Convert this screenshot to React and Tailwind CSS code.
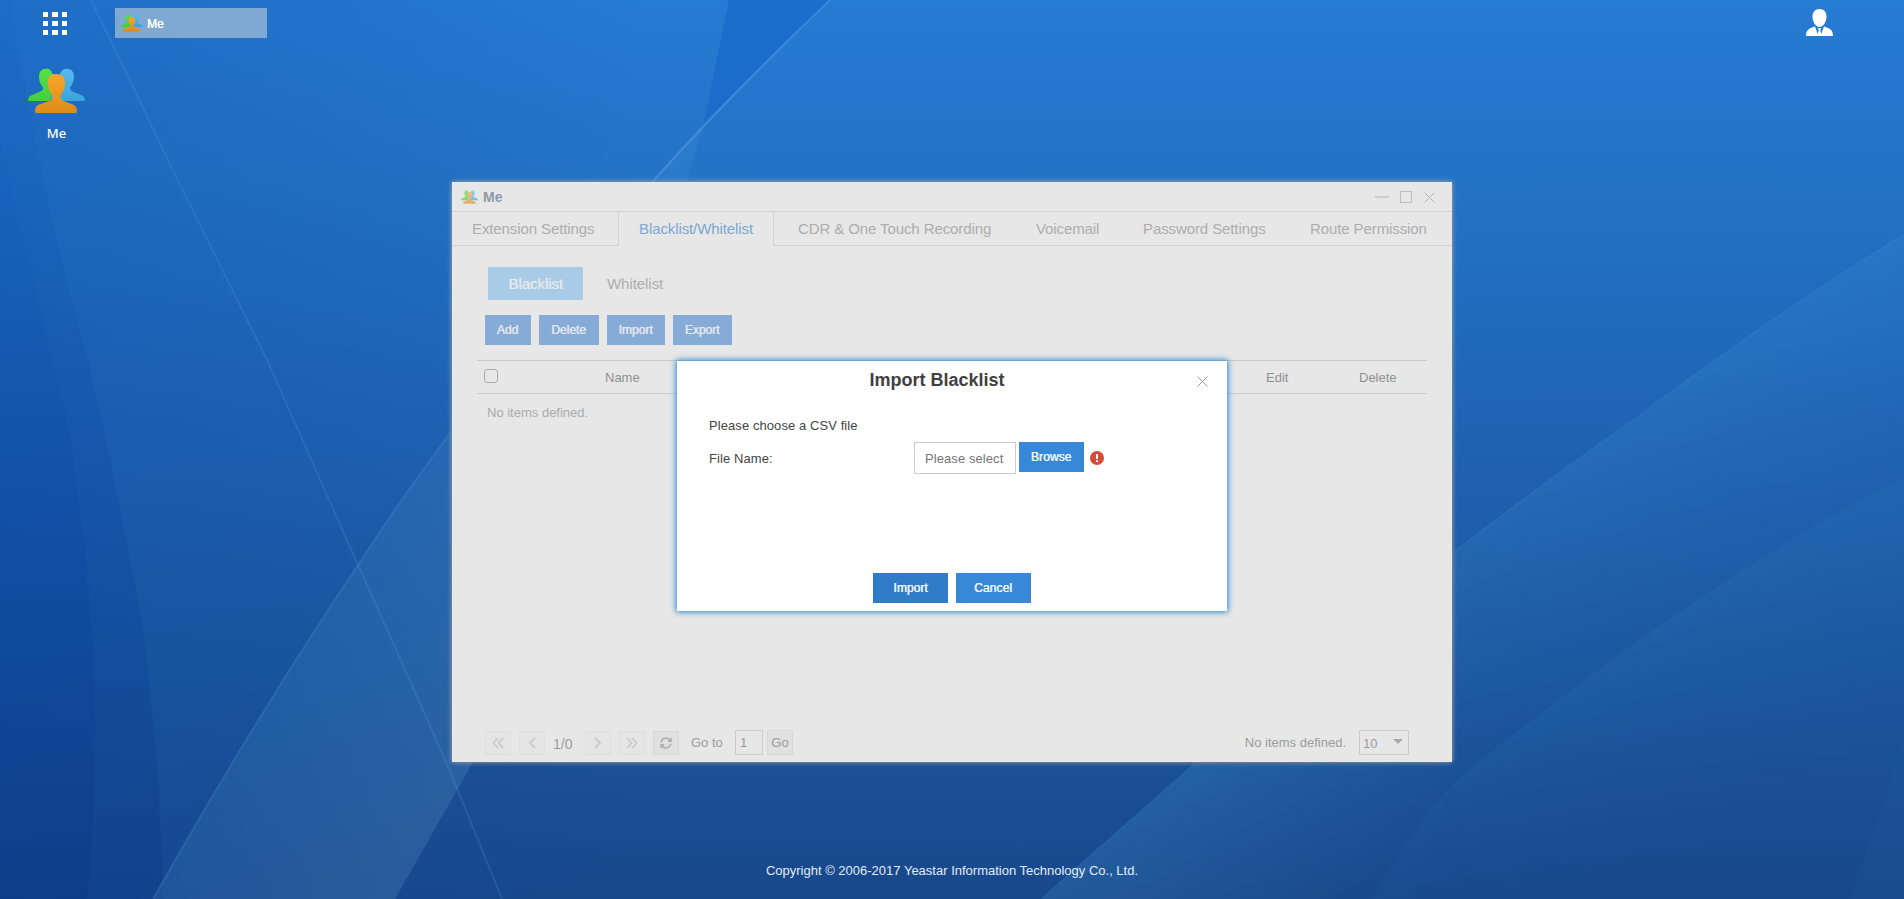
import React from "react";
import { FaSyncAlt } from "react-icons/fa";

function Wallpaper() {
  return (
    <svg className="absolute inset-0 h-full w-full" viewBox="0 0 1904 899" preserveAspectRatio="none" aria-hidden="true">
      <defs>
        <linearGradient id="base" x1="0" y1="0" x2="0" y2="1">
          <stop offset="0" stopColor="#267bd2" />
          <stop offset="0.2" stopColor="#2373c7" />
          <stop offset="0.5" stopColor="#1f62b2" />
          <stop offset="0.78" stopColor="#1b549b" />
          <stop offset="1" stopColor="#18488b" />
        </linearGradient>
        <linearGradient id="leftShade" x1="0" y1="0" x2="1" y2="0">
          <stop offset="0" stopColor="#084aa6" stopOpacity="0.26" />
          <stop offset="0.5" stopColor="#08439a" stopOpacity="0.13" />
          <stop offset="1" stopColor="#08439a" stopOpacity="0" />
        </linearGradient>
        <linearGradient id="curve" x1="0" y1="0" x2="0" y2="1">
          <stop offset="0" stopColor="#0550b4" stopOpacity="0.05" />
          <stop offset="0.5" stopColor="#0540a0" stopOpacity="0.2" />
          <stop offset="1" stopColor="#06307e" stopOpacity="0.26" />
        </linearGradient>
        <linearGradient id="beam" gradientUnits="userSpaceOnUse" x1="280" y1="660" x2="480" y2="790">
          <stop offset="0" stopColor="#3f86c0" stopOpacity="0.22" />
          <stop offset="1" stopColor="#5a96c4" stopOpacity="0.27" />
        </linearGradient>
        <linearGradient id="rightBeam" gradientUnits="userSpaceOnUse" x1="1500" y1="510" x2="1630" y2="700">
          <stop offset="0" stopColor="#3a8fd0" stopOpacity="0.22" />
          <stop offset="1" stopColor="#2a78c0" stopOpacity="0" />
        </linearGradient>
        <linearGradient id="rightLow" gradientUnits="userSpaceOnUse" x1="1640" y1="640" x2="1740" y2="830">
          <stop offset="0" stopColor="#2c7fbd" stopOpacity="0.16" />
          <stop offset="1" stopColor="#1e5ca6" stopOpacity="0" />
        </linearGradient>
        <linearGradient id="fade" gradientUnits="userSpaceOnUse" x1="1180" y1="770" x2="1420" y2="899">
          <stop offset="0" stopColor="#4188bb" stopOpacity="0.14" />
          <stop offset="1" stopColor="#3d85ba" stopOpacity="0" />
        </linearGradient>
      </defs>
      <rect width="1904" height="899" fill="url(#base)" />
      <rect width="640" height="899" fill="url(#leftShade)" />
      <path d="M0 0H10C25 90 55 250 83 341C100 405 125 530 143 628C152 700 161 790 163 899H0Z" fill="url(#curve)" />
      <path d="M0 140C20 230 50 350 67 418C80 500 95 620 95 714C96 790 92 850 87 899H0Z" fill="url(#curve)" />
      <path d="M729 0H830L704 122Z" fill="#1464cb" opacity="0.55" />
      <path d="M652 182L704 122L687 182Z" fill="#4d9add" opacity="0.18" />
      <path d="M652 182L450 433Q400 500 358 565Q260 710 153 899H395L452 799L800 182Z" fill="url(#beam)" />
      <path d="M91 0Q130 80 163 150L267 360L358 565Q410 680 450 771L502 899" fill="none" stroke="#59a2e2" strokeWidth="2" opacity="0.2" />
      <path d="M830 0Q740 85 652 182" fill="none" stroke="#6aaee8" strokeWidth="2" opacity="0.35" />
      <path d="M652 182Q540 315 450 433Q400 500 358 565Q260 710 153 899" fill="none" stroke="#6aa4dc" strokeWidth="2" opacity="0.2" />
      <path d="M1904 234Q1752 330 1637 417Q1540 485 1455 551Q1300 670 1194 764L1041 899H1904Z" fill="url(#rightBeam)" />
      <path d="M1194 764L1041 899H1420L1452 764Z" fill="url(#fade)" />
      <path d="M1904 234Q1752 330 1637 417Q1540 485 1455 551Q1300 670 1194 764L1041 899" fill="none" stroke="#4f9add" strokeWidth="1.5" opacity="0.15" />
      <path d="M1904 478Q1800 530 1702 597Q1600 665 1535 719Q1490 750 1452 785Q1410 830 1372 899H1904Z" fill="url(#rightLow)" />
      <path d="M1904 740L1850 899H1904Z" fill="#2c6fb0" opacity="0.08" />
    </svg>
  );
}

function UsersIcon({ className, id }) {
  return (
    <svg className={className} viewBox="0 0 57 45" aria-hidden="true">
      <defs>
        <linearGradient id={id + "g"} x1="0" y1="0" x2="0" y2="1"><stop offset="0" stopColor="#56e04c" /><stop offset="1" stopColor="#43cf3c" /></linearGradient>
        <linearGradient id={id + "b"} x1="0" y1="0" x2="0" y2="1"><stop offset="0" stopColor="#54b9f1" /><stop offset="1" stopColor="#3ba4dc" /></linearGradient>
        <linearGradient id={id + "o"} x1="0" y1="0" x2="0" y2="1"><stop offset="0" stopColor="#f9a52c" /><stop offset="1" stopColor="#dd8c1a" /></linearGradient>
      </defs>
      <path fill={"url(#" + id + "g)"} d="M18 .7C13.500 .7 11 4 11 8.500C11 13 12.500 17 15 19.500C15 21.500 14.500 22.500 12.500 23.500L4 27C1 28.300 0 30 0 33H22L26 24V6C24 6 24.500 6 24.200 5.500C23 2 21.500 .7 18 .7Z" />
      <path fill={"url(#" + id + "b)"} d="M39 .7C43.500 .7 46 4 46 8.500C46 13 44.500 17 42 19.500C42 21.500 42.500 22.500 44.500 23.500L53 27C56 28.300 57 30 57 33H24L22.500 30L32 6C33.500 2 35.500 .7 39 .7Z" />
      <path fill={"url(#" + id + "o)"} d="M28.500 6C23 6 19.800 9.500 19.800 14.500C19.800 19.500 21.500 24 24.500 27.500C25 30 24 32 21.500 33L11 36.500C8 37.800 7 40 7 43.500Q7 45 8.500 45H47.500Q49 45 49 43.500C49 40 48 37.800 45 36.500L35.500 33C33 32 32 30 32.500 27.500C35.500 24 37.200 19.500 37.200 14.500C37.200 9.500 34 6 28.500 6Z" />
    </svg>
  );
}

function CloseIcon({ color }) {
  return (
    <svg className="block h-[11px] w-[11px]" viewBox="0 0 11 11" aria-hidden="true">
      <path d="M.5 .5L10.500 10.500M10.500 .5L.5 10.500" stroke={color} strokeWidth="1" fill="none" />
    </svg>
  );
}

const tabs = [
  { label: "Extension Settings", style: "w-[166px] pl-5 border-b border-[#d2d2d2]" },
  { label: "Blacklist/Whitelist", style: "w-[156px] pl-5 border-x border-[#d2d2d2] text-[#7ba8d2]" },
  { label: "CDR & One Touch Recording", style: "w-[240px] pl-6 border-b border-[#d2d2d2]" },
  { label: "Voicemail", style: "w-[107px] pl-[22px] border-b border-[#d2d2d2]" },
  { label: "Password Settings", style: "w-[167px] pl-[22px] border-b border-[#d2d2d2]" },
  { label: "Route Permission", style: "grow pl-[22px] border-b border-[#d2d2d2]" },
];

const actions = [
  { label: "Add", width: "w-[46px]" },
  { label: "Delete", width: "w-[60px]" },
  { label: "Import", width: "w-[58px]" },
  { label: "Export", width: "w-[59px]" },
];

function PagerButton({ children, strong }) {
  return (
    <button className={"flex h-6 w-[26px] items-center justify-center border " + (strong ? "border-[#d6d6d6] bg-[#e0e0e0] text-[#b0b0b0]" : "border-[#dedede] bg-[#e5e5e5] text-[#cbcbcb]")}>
      {children}
    </button>
  );
}

function Chevrons({ d, w }) {
  return (
    <svg className="block h-3" width={w} height="12" viewBox={"0 0 " + w + " 12"} aria-hidden="true">
      <path d={d} fill="none" stroke="currentColor" strokeWidth="1.8" />
    </svg>
  );
}

function DesktopWindow() {
  return (
    <section className="absolute top-[182px] left-[452px] flex h-[580px] w-[1000px] flex-col bg-[#e7e7e7] shadow-[0_0_5px_#b4ab9c]">
      <header className="flex h-[29px] items-center pl-[9px]">
        <UsersIcon id="win" className="h-[14px] w-[17px] opacity-60" />
        <h1 className="ml-[5px] grow text-[14px] leading-[18px] font-bold text-[#8e99a8]">Me</h1>
        <div className="flex items-center pr-[17px]">
          <span className="h-[2px] w-[14px] bg-[#cccccc]" />
          <span className="ml-[11px] h-3 w-3 border border-[#bdbdbd]" />
          <span className="ml-3 pt-px"><CloseIcon color="#b5b5b5" /></span>
        </div>
      </header>
      <nav className="flex h-[35px] border-t border-[#d2d2d2] text-[15px] tracking-[-0.1px] text-[#adadad]">
        {tabs.map((t) => (
          <div key={t.label} className={"pt-[8px] leading-[18px] whitespace-nowrap " + t.style}>{t.label}</div>
        ))}
      </nav>
      <div className="flex grow flex-col pt-[21px] pr-[25px] pl-[25px]">
        <div className="flex pl-[11px] text-[15px] tracking-[-0.05px]">
          <div className="flex h-[33px] w-[95px] items-center justify-center bg-[#a8cbe8] pt-px text-[#e7e7e7] [text-shadow:0.5px_0_0_#e7e7e7]">Blacklist</div>
          <div className="flex h-[33px] items-center pt-px pl-6 text-[#adadad]">Whitelist</div>
        </div>
        <div className="mt-[15px] flex gap-2 pl-2">
          {actions.map((a) => (
            <button key={a.label} className={"h-[30px] bg-[#86abd6] pr-px text-[12px] text-[#e3e7ec] [text-shadow:0.5px_0_0_#e3e7ec] " + a.width}>{a.label}</button>
          ))}
        </div>
        <div className="mt-[15px] flex h-[34px] items-center border-y border-[#cbcbcb] text-[13px] text-[#8f8f8f]">
          <span className="mb-[3px] ml-[7px] h-[14px] w-[14px] rounded-[3px] border-[1.500px] border-[#adadad]" />
          <span className="w-[247px] pt-px pl-[107px]">Name</span>
          <span className="grow" />
          <span className="w-[93px] pt-px">Edit</span>
          <span className="w-[68px] pt-px">Delete</span>
        </div>
        <p className="pt-[9px] pl-[10px] text-[13px] leading-[20px] text-[#ababab]">No items defined.</p>
        <footer className="mt-auto mb-[7px] flex h-[25px] items-end pl-2 text-[13px] text-[#9b9b9b]">
          <PagerButton><Chevrons w={12} d="M6 1L1.500 6L6 11M11 1L6.500 6L11 11" /></PagerButton>
          <span className="w-2" />
          <PagerButton><Chevrons w={8} d="M7 1L2 6L7 11" /></PagerButton>
          <span className="w-10 pb-px pl-2 text-[14px] leading-[20px]">1/0</span>
          <PagerButton><Chevrons w={8} d="M1 1L6 6L1 11" /></PagerButton>
          <span className="w-2" />
          <PagerButton><Chevrons w={12} d="M1 1L5.500 6L1 11M6 1L10.500 6L6 11" /></PagerButton>
          <span className="w-2" />
          <PagerButton strong><FaSyncAlt className="h-3 w-3" /></PagerButton>
          <span className="w-14 pl-3 leading-[24px]">Go to</span>
          <span className="h-[25px] w-7 border border-[#cbcbcb] pl-1 text-[13px] leading-[23px]">1</span>
          <button className="ml-1 h-[25px] w-[26px] border border-[#d8d8d8] bg-[#e1e1e1]">Go</button>
          <span className="grow" />
          <span className="leading-[24px]">No items defined.</span>
          <span className="mr-[18px] ml-[13px] flex h-[25px] w-[50px] justify-between border border-[#cbcbcb] pr-[5px] pl-[3px] text-[13px] leading-[26px]">
            10
            <svg className="mt-2 block h-[5px] w-[10px]" viewBox="0 0 10 5" aria-hidden="true"><path d="M0 0H10L5 5Z" fill="#aaaaaa" /></svg>
          </span>
        </footer>
      </div>
    </section>
  );
}

function ImportDialog() {
  return (
    <section className="absolute top-[361px] left-[677px] flex h-[250px] w-[550px] flex-col bg-white text-[13px] tracking-[0.08px] text-[#444444] shadow-[0_0_6px_1px_#2583cc]">
      <header className="flex h-10 items-center pr-[19px] pb-[2px]">
        <h2 className="grow text-center text-[18px] leading-[22px] font-bold tracking-normal text-[#404040]">Import Blacklist</h2>
        <span className="pt-[2px]"><CloseIcon color="#999999" /></span>
      </header>
      <div className="flex grow flex-col pl-8">
        <p className="mt-[15px] leading-[20px]">Please choose a CSV file</p>
        <div className="mt-[6px] flex">
          <span className="w-[205px] pt-px leading-[32px]">File Name:</span>
          <span className="h-8 w-[102px] border border-[#cccccc] pt-px pl-[10px] leading-[30px] whitespace-nowrap text-[#757575]">Please select</span>
          <button className="ml-[3px] h-[30px] w-[65px] bg-[#3888d8] pr-px text-[12px] text-[#eef5fc] [text-shadow:0.5px_0_0_#eef5fc]">Browse</button>
          <svg className="mt-[9px] ml-[6px] block h-[14px] w-[14px]" viewBox="0 0 14 14" aria-hidden="true">
            <circle cx="7" cy="7" r="7" fill="#d84c37" />
            <path d="M6 3H8V8H6ZM6 9.200H8V11H6Z" fill="#fff" />
          </svg>
        </div>
      </div>
      <footer className="mb-2 flex gap-2 pl-[196px] text-[12px] text-[#eef5fc]">
        <button className="h-[30px] w-[75px] bg-[#317cc6] [text-shadow:0.5px_0_0_#eef5fc]">Import</button>
        <button className="h-[30px] w-[75px] bg-[#3888d8] pr-px [text-shadow:0.5px_0_0_#eef5fc]">Cancel</button>
      </footer>
    </section>
  );
}

export default function App() {
  return (
    <div className="relative flex h-[899px] w-full flex-col overflow-hidden bg-[#1f62b2] font-['Liberation_Sans',Arial,sans-serif]">
      <Wallpaper />
      <div className="relative flex h-[47px] items-start">
        <div className="mt-3 ml-[43px] grid h-[23px] w-[24px] grid-cols-3 grid-rows-3 gap-[4px]">
          {[0, 1, 2, 3, 4, 5, 6, 7, 8].map((i) => <span key={i} className="bg-white" />)}
        </div>
        <div className="mt-2 ml-12 flex h-[30px] w-[152px] items-center bg-[#7fa8d3] pl-[6px] text-[12px] text-white">
          <UsersIcon id="task" className="h-[18px] w-[22px]" />
          <span className="ml-1 pt-px leading-[16px] [text-shadow:0.3px_0_0_#fff]">Me</span>
        </div>
        <svg className="mt-[9px] mr-[71px] ml-auto block h-[27px] w-[27px]" viewBox="0 0 27 27" aria-hidden="true">
          <path fill="#fff" d="M13.500 0C9 0 6.500 3 6.500 7.500C6.500 12.500 9.500 18 13.500 18C17.500 18 20.500 12.500 20.500 7.500C20.500 3 18 0 13.500 0ZM9 17.500C4.500 19 0 20 0 27H27C27 20 22.500 19 18 17.500L15.200 25L14.300 21L15.300 19.300H11.700L12.700 21L11.800 25Z" />
        </svg>
      </div>
      <div className="relative flex w-[113px] flex-col items-center pt-[21px]">
        <UsersIcon id="desk" className="h-[45px] w-[57px]" />
        <span className="mt-[11px] font-['Noto_Sans',sans-serif] text-[13px] leading-[18px] font-medium text-white">Me</span>
      </div>
      <DesktopWindow />
      <ImportDialog />
      <footer className="relative mt-auto mb-[19px] text-center text-[13px] leading-[18px] text-[#e3ecf7]">
        Copyright © 2006-2017 Yeastar Information Technology Co., Ltd.
      </footer>
    </div>
  );
}
